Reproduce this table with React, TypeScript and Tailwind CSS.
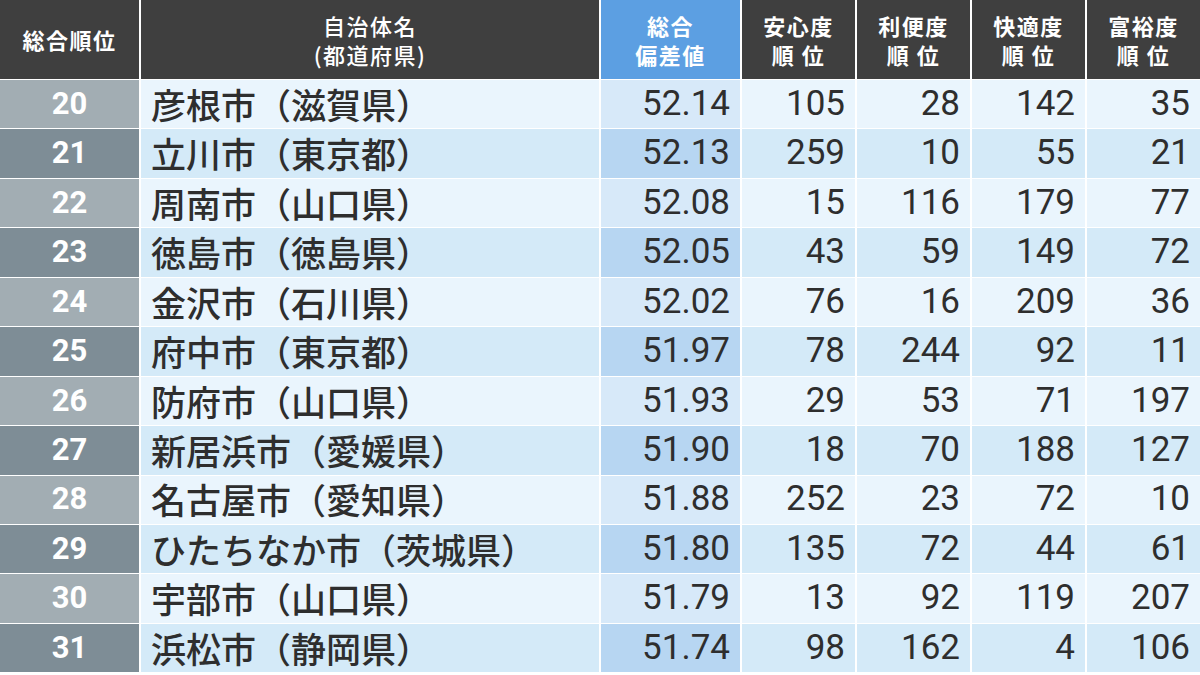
const rows = [
  { rank: 20, name: "彦根市（滋賀県）", score: "52.14", a: 105, b: 28, c: 142, d: 35 },
  { rank: 21, name: "立川市（東京都）", score: "52.13", a: 259, b: 10, c: 55, d: 21 },
  { rank: 22, name: "周南市（山口県）", score: "52.08", a: 15, b: 116, c: 179, d: 77 },
  { rank: 23, name: "徳島市（徳島県）", score: "52.05", a: 43, b: 59, c: 149, d: 72 },
  { rank: 24, name: "金沢市（石川県）", score: "52.02", a: 76, b: 16, c: 209, d: 36 },
  { rank: 25, name: "府中市（東京都）", score: "51.97", a: 78, b: 244, c: 92, d: 11 },
  { rank: 26, name: "防府市（山口県）", score: "51.93", a: 29, b: 53, c: 71, d: 197 },
  { rank: 27, name: "新居浜市（愛媛県）", score: "51.90", a: 18, b: 70, c: 188, d: 127 },
  { rank: 28, name: "名古屋市（愛知県）", score: "51.88", a: 252, b: 23, c: 72, d: 10 },
  { rank: 29, name: "ひたちなか市（茨城県）", score: "51.80", a: 135, b: 72, c: 44, d: 61 },
  { rank: 30, name: "宇部市（山口県）", score: "51.79", a: 13, b: 92, c: 119, d: 207 },
  { rank: 31, name: "浜松市（静岡県）", score: "51.74", a: 98, b: 162, c: 4, d: 106 },
];

const subHeads = ["安心度", "利便度", "快適度", "富裕度"];

function Head({ lines, blue, weight = "font-bold" }: { lines: string[]; blue?: boolean; weight?: string }) {
  return (
    <div
      className={`${blue ? "bg-[#5c9fe2]" : "bg-[#3f3f3f]"} text-white ${weight} text-[22px] leading-[29px] tracking-[1.5px] flex flex-col items-center justify-center font-['Noto_Sans_CJK_JP','Noto_Sans',sans-serif]`}
    >
      {lines.map((l) => (
        <span key={l} className="whitespace-nowrap">
          {l}
        </span>
      ))}
    </div>
  );
}

export default function App() {
  return (
    <div className="w-[1200px] h-[675px] overflow-hidden bg-white">
      <div className="grid grid-cols-[139px_458px_139px_113px_113px_113px_113px] gap-x-[2px] gap-y-[1px] auto-rows-[48.45px] grid-rows-[79px]">
        {/* header */}
        <Head lines={["総合順位"]} />
        <Head lines={["自治体名", "(都道府県)"]} weight="font-medium" />
        <Head lines={["総合", "偏差値"]} blue />
        {subHeads.map((h) => (
          <Head key={h} lines={[h, "順 位"]} />
        ))}

        {/* body */}
        {rows.map((r, i) => {
          const odd = i % 2 === 1;
          const cell = odd ? "bg-[#d4eaf8]" : "bg-[#eaf5fd]";
          const numCls = `${cell} flex items-center justify-end pr-[10px] text-[35px] text-[#2e2e2e] font-[Roboto,'Liberation_Sans',sans-serif]`;
          return [
            <div
              key={`r${r.rank}`}
              className={`${odd ? "bg-[#7e8d96]" : "bg-[#a2adb3]"} flex items-center justify-center text-white font-bold text-[31px] font-[Roboto,'Liberation_Sans',sans-serif]`}
            >
              {r.rank}
            </div>,
            <div
              key={`n${r.rank}`}
              className={`${cell} flex items-center pl-[10px] text-[35px] font-medium text-[#2e2e2e] whitespace-nowrap font-['Noto_Sans_CJK_JP','Noto_Sans',sans-serif]`}
            >
              {r.name}
            </div>,
            <div
              key={`s${r.rank}`}
              className={`${odd ? "bg-[#b7d6f2]" : "bg-[#d7e9f9]"} flex items-center justify-end pr-[10px] text-[35px] text-[#2e2e2e] font-[Roboto,'Liberation_Sans',sans-serif]`}
            >
              {r.score}
            </div>,
            <div key={`a${r.rank}`} className={numCls}>
              {r.a}
            </div>,
            <div key={`b${r.rank}`} className={numCls}>
              {r.b}
            </div>,
            <div key={`c${r.rank}`} className={numCls}>
              {r.c}
            </div>,
            <div key={`d${r.rank}`} className={numCls}>
              {r.d}
            </div>,
          ];
        })}
      </div>
    </div>
  );
}
